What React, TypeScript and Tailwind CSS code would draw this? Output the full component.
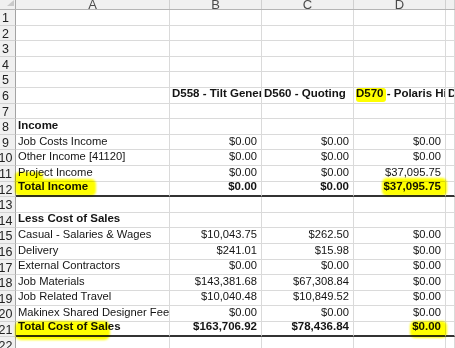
import React from 'react';

type Row = {
    a?: string;
    b?: string;
    c?: string;
    d?: string;
    e?: string;
    bold?: boolean;
    total?: boolean;
    heading?: boolean;
};

const rows: Row[] = [
    {}, {}, {}, {}, {},
    { b: 'D558 - Tilt Generator', c: 'D560 - Quoting', d: 'D570 - Polaris Hire', e: 'D580', bold: true, heading: true },
    {},
    { a: 'Income', bold: true },
    { a: 'Job Costs Income', b: '$0.00', c: '$0.00', d: '$0.00' },
    { a: 'Other Income [41120]', b: '$0.00', c: '$0.00', d: '$0.00' },
    { a: 'Project Income', b: '$0.00', c: '$0.00', d: '$37,095.75' },
    { a: 'Total Income', b: '$0.00', c: '$0.00', d: '$37,095.75', bold: true, total: true },
    {},
    { a: 'Less Cost of Sales', bold: true },
    { a: 'Casual - Salaries & Wages', b: '$10,043.75', c: '$262.50', d: '$0.00' },
    { a: 'Delivery', b: '$241.01', c: '$15.98', d: '$0.00' },
    { a: 'External Contractors', b: '$0.00', c: '$0.00', d: '$0.00' },
    { a: 'Job Materials', b: '$143,381.68', c: '$67,308.84', d: '$0.00' },
    { a: 'Job Related Travel', b: '$10,040.48', c: '$10,849.52', d: '$0.00' },
    { a: 'Makinex Shared Designer Fee', b: '$0.00', c: '$0.00', d: '$0.00' },
    { a: 'Total Cost of Sales', b: '$163,706.92', c: '$78,436.84', d: '$0.00', bold: true, total: true },
    {},
];

const cols = 'grid grid-cols-[16px_154px_92px_92px_92px_9px]';

function Cell({ text, right, row }: { text?: string; right?: boolean; row: Row }) {
    return (
        <div
            className={`flex items-end overflow-hidden whitespace-nowrap border-r border-[#dadada] leading-normal ${
                row.total ? 'border-b-2 border-b-[#333333]' : 'border-b'
            } ${right ? 'justify-end pr-[4px]' : 'pl-[2px]'} ${row.bold ? 'text-[11.5px] font-bold' : ''}`}
        >
            {text}
        </div>
    );
}

export default function App() {
    return (
        <div className="relative h-[348px] w-[455px] overflow-hidden bg-white font-['Liberation_Sans',Arial,sans-serif] text-[11.2px] text-[#141414]">
            {/* column headers, top half cut off */}
            <div className={`${cols} h-[10px] border-b border-[#b4b4b4] bg-[#f0f0f0] text-[13px] text-[#4a4a4a]`}>
                <div className="relative border-r border-[#a8a8a8]">
                    <svg className="absolute right-[1px] top-0" width="7" height="6" viewBox="0 0 7 6">
                        <polygon points="7,0 7,6 0,6" fill="#c9c9c9" />
                    </svg>
                </div>
                {['A', 'B', 'C', 'D', ''].map((l, i) => (
                    <div key={i} className="flex items-end justify-center overflow-hidden border-r border-[#d0d0d0] leading-none">
                        <span className="-mb-[2px]">{l}</span>
                    </div>
                ))}
            </div>

            {rows.map((row, i) => (
                <div key={i} className={`${cols} h-[15.6px]`}>
                    <div className="flex items-end justify-center border-b border-r border-b-[#d2d2d2] border-r-[#a3a3a3] bg-[#f0f0f0] pr-[4px] text-[12.5px] leading-none text-[#222222]">
                        {i + 1}
                    </div>
                    <Cell text={row.a} row={row} />
                    <Cell text={row.b} row={row} right={!row.heading} />
                    <Cell text={row.c} row={row} right={!row.heading} />
                    <Cell text={row.d} row={row} right={!row.heading} />
                    <Cell text={row.e} row={row} />
                </div>
            ))}

            {/* highlighter marks */}
            <div className="pointer-events-none absolute left-[356px] top-[88px] h-[14px] w-[30px] rounded-[3px] bg-[#ffff00] mix-blend-multiply blur-[0.6px]" />
            <div className="pointer-events-none absolute left-[15px] top-[172px] h-[12px] w-[28px] rounded-[4px] bg-[#ffff00] mix-blend-multiply blur-[0.8px]" />
            <div className="pointer-events-none absolute left-[15px] top-[179px] h-[17px] w-[81px] rounded-[5px] bg-[#ffff00] mix-blend-multiply blur-[0.8px]" />
            <div className="pointer-events-none absolute left-[382px] top-[178px] h-[18px] w-[65px] rounded-[5px] bg-[#ffff00] mix-blend-multiply blur-[0.8px]" />
            <div className="pointer-events-none absolute left-[15px] top-[321px] h-[19px] w-[95px] rounded-[6px] bg-[#ffff00] mix-blend-multiply blur-[0.8px]" />
            <div className="pointer-events-none absolute left-[410px] top-[321px] h-[17px] w-[37px] rounded-[5px] bg-[#ffff00] mix-blend-multiply blur-[0.8px]" />
        </div>
    );
}
